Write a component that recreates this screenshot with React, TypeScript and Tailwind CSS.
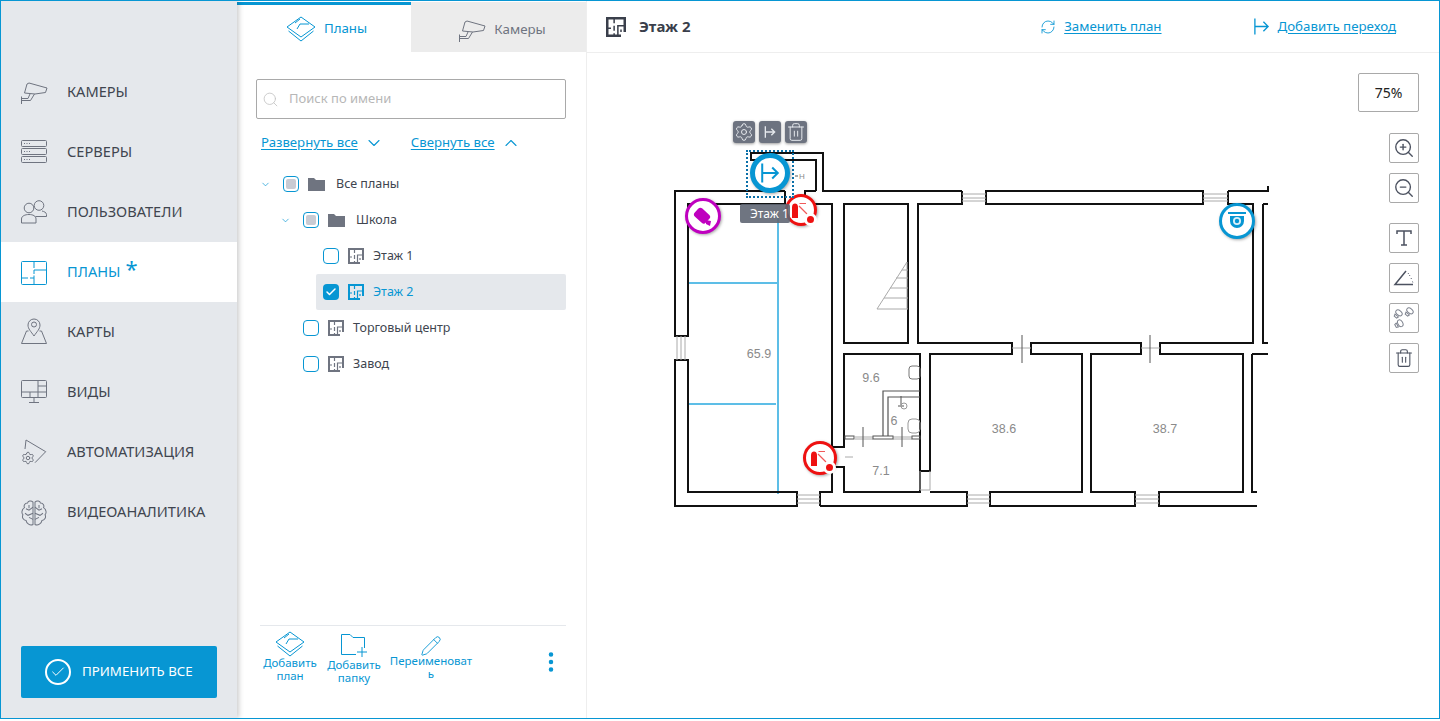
import React from 'react';
import { Check, ChevronDown, ChevronUp, Search, RefreshCw, ZoomIn, ZoomOut, Trash2, Pencil, MoreVertical, Settings } from 'lucide-react';

const FONT = "font-['Noto_Sans','Open_Sans',sans-serif]";

const Svg: React.FC<{ size?: number; vb?: string; className?: string; children: React.ReactNode }> = ({ size = 28, vb = '0 0 28 28', className = '', children }) => (
  <svg width={size} height={size} viewBox={vb} fill="none" stroke="currentColor" strokeWidth={1} className={className}>
    {children}
  </svg>
);

const CameraIcon = () => (
  <Svg>
    <path d="M7 6 L9 5 L27 10 L25.5 14.5 L15 16 L4.5 15 Z M10 16 L8 20.5 H1.5 M1.5 18.5 V26 M14.5 16 L10.5 22.5 H1.5" />
  </Svg>
);
const ServersIcon = () => (
  <Svg>
    <rect x="1.5" y="2.5" width="25" height="6" rx="1" />
    <rect x="1.5" y="10.5" width="25" height="6" rx="1" />
    <rect x="1.5" y="18.5" width="25" height="6" rx="1" />
    <path d="M4 5.5h1M6.5 5.5h1M9 5.5h1M4 13.5h1M6.5 13.5h1M9 13.5h1M4 21.5h1M6.5 21.5h1M9 21.5h1" />
  </Svg>
);
const UsersIcon = () => (
  <Svg>
    <circle cx="19" cy="7.5" r="4.8" />
    <circle cx="9" cy="10" r="4.8" />
    <path d="M1.5 25 V21 C1.5 18 5 16.5 9 16.5 C13 16.5 16 18 16 21 V25 Z M15.5 18.5 H26.5 V16.5 C26.5 14.5 24 13.5 22 13" />
  </Svg>
);
const PlanIcon = () => (
  <Svg>
    <rect x="1.5" y="3.5" width="25" height="23" rx="1" />
    <path d="M14 3.5 V10 M14 12 H26.5 M14 12 V16 M1.5 20 H8 M10 20 H14 V26.5 M14 17.5 V20" />
  </Svg>
);
const FloorIcon: React.FC<{ size?: number; className?: string }> = ({ size = 16, className = '' }) => (
  <svg width={size} height={size} viewBox="0 0 16 16" fill="none" stroke="currentColor" className={className}>
    <path d="M12 15 H1 V1 H15 V12" strokeWidth="2" />
    <path d="M6.5 1 V5 M6.5 7 V11 M1 9 H4 M6.5 13 V15 M9.5 15 V7 H15 M12 10 V12" strokeWidth="1.2" />
  </svg>
);
const MapIcon = () => (
  <Svg>
    <circle cx="14" cy="6.5" r="2.5" />
    <path d="M14 18 C11 13.5 8 11 8 7 A6 6 0 0 1 20 7 C20 11 17 13.5 14 18 Z M8.5 13 H6.5 L1.5 25.5 H26.5 L21.5 13 H19.5" />
  </Svg>
);
const ViewsIcon = () => (
  <Svg>
    <rect x="1.5" y="2.5" width="25" height="17" rx="1" />
    <path d="M1.5 14 H26.5 M18 2.5 V19.5 M18 8 H26.5 M10 14 V19.5 M14 19.5 V24.5 M9 24.5 H19" />
  </Svg>
);
const AutoIcon = () => (
  <Svg>
    <path d="M5 11 L6 2 L25.7 13.7 L15 24.7" />
    <Settings x={1} y={13} width={14} height={14} strokeWidth={1.7} />
  </Svg>
);
const BrainIcon = () => (
  <Svg>
    <g transform="translate(0 1) scale(1 1.02)">
      <path d="M13 3 C11 1 8 2 7.5 4 C4.5 4 3.5 7 4.5 8.5 C2 10 1 13.5 3 15.5 C1.5 18 3.5 21 6 21 C6.5 24 10 26.5 13 25 Z M15 3 C17 1 20 2 20.5 4 C23.5 4 24.5 7 23.5 8.5 C26 10 27 13.5 25 15.5 C26.5 18 24.5 21 22 21 C21.5 24 18 26.5 15 25 Z" />
      <path d="M13 8 L9 11 L6 9.5 M13 14 L8 16 L5 14 M13 20 L9 18 M9 6 V9 M15 8 L19 11 L22 9.5 M15 14 L20 16 L23 14 M15 20 L19 18 M19 6 V9" />
    </g>
  </Svg>
);
const LayersIcon = () => (
  <svg width="30" height="26" viewBox="0 0 30 26" fill="none" stroke="currentColor" strokeWidth="1">
    <path d="M15 1 L29 11 L15 21 L1 11 Z M9 7 L14 3 M14 8 H23 M14 8 L11 13" />
    <path d="M2.5 15 L15 25 L27.5 15" />
  </svg>
);
const ExitGlyph: React.FC<{ size?: number; className?: string; strokeWidth?: number }> = ({ size = 18, className = '', strokeWidth = 1.5 }) => (
  <svg width={size} height={size} viewBox="0 0 18 18" fill="none" stroke="currentColor" strokeWidth={strokeWidth} className={className}>
    <path d="M2 .5 V17.5 M2 9 H16 M11 4 L16 9 L11 14" />
  </svg>
);

const navItems = [
  { label: 'КАМЕРЫ', icon: <CameraIcon /> },
  { label: 'СЕРВЕРЫ', icon: <ServersIcon /> },
  { label: 'ПОЛЬЗОВАТЕЛИ', icon: <UsersIcon /> },
  { label: 'ПЛАНЫ', icon: <PlanIcon />, active: true },
  { label: 'КАРТЫ', icon: <MapIcon /> },
  { label: 'ВИДЫ', icon: <ViewsIcon /> },
  { label: 'АВТОМАТИЗАЦИЯ', icon: <AutoIcon /> },
  { label: 'ВИДЕОАНАЛИТИКА', icon: <BrainIcon /> },
];

const Sidebar = () => (
  <aside className="w-[236px] shrink-0 bg-[#e5e8ec] flex flex-col pt-[61px] shadow-[2px_0_5px_rgba(0,0,0,0.2)] z-10">
    {navItems.map((item) => (
      <div key={item.label} className={`h-[60px] flex items-center pl-[19px] gap-[19px] text-[14.6px] ${item.active ? 'bg-white text-[#0796d3]' : 'text-[#40454f]'}`}>
        <span className={item.active ? 'text-[#0796d3]' : 'text-[#6f7480]'}>{item.icon}</span>
        <span>{item.label}</span>
        {item.active && <span className="text-[22px] leading-none -ml-[14px] -mt-[8px]">*</span>}
      </div>
    ))}
    <div className="mt-auto mx-[20px] mb-[20px] h-[52px] bg-[#0796d3] rounded-[2px] flex items-center pl-[24px] pb-[1px] gap-[11px] text-white text-[13.3px]">
      <span className="w-[26px] h-[26px] mt-[1px] rounded-full border-2 border-white flex items-center justify-center">
        <Check size={16} strokeWidth={1.5} />
      </span>
      ПРИМЕНИТЬ ВСЕ
    </div>
  </aside>
);

type TreeRow = { label: string; pad: string; kind: 'folder' | 'plan'; state: 'some' | 'none' | 'checked'; arrow?: boolean; selected?: boolean };

const treeRows: TreeRow[] = [
  { label: 'Все планы', pad: 'ml-[5px]', kind: 'folder', state: 'some', arrow: true },
  { label: 'Школа', pad: 'ml-[25px]', kind: 'folder', state: 'some', arrow: true },
  { label: 'Этаж 1', pad: 'ml-[60px]', kind: 'plan', state: 'none' },
  { label: 'Этаж 2', pad: 'ml-[60px]', kind: 'plan', state: 'checked', selected: true },
  { label: 'Торговый центр', pad: 'ml-[40px]', kind: 'plan', state: 'none' },
  { label: 'Завод', pad: 'ml-[40px]', kind: 'plan', state: 'none' },
];

const Box: React.FC<{ state: TreeRow['state'] }> = ({ state }) => {
  if (state === 'checked')
    return (
      <span className="w-4 h-4 rounded-[4px] bg-[#0796d3] flex items-center justify-center text-white">
        <Check size={12} strokeWidth={3} />
      </span>
    );
  return (
    <span className="w-4 h-4 rounded-[4px] border border-[#0796d3] flex items-center justify-center bg-white">
      {state === 'some' && <span className="w-[10px] h-[10px] rounded-[2px] bg-[#c9cbd3]" />}
    </span>
  );
};

const Folder = () => (
  <svg width="17" height="13" viewBox="0 0 17 13" className="text-[#6f7480]">
    <path d="M0 0 H6 L8 2 H17 V13 H0 Z" fill="currentColor" />
  </svg>
);

const Tree = () => (
  <div className="mt-[13px]">
    {treeRows.map((r) => (
      <div key={r.label} className={`h-[36px] flex items-center text-[12.5px] ${r.pad} ${r.selected ? 'bg-[#e5e8ec] rounded-[2px] text-[#0796d3]' : 'text-[#40454f]'}`}>
        {r.arrow && <ChevronDown size={11} className="text-[#0796d3] -ml-[1px] mr-[12px]" strokeWidth={1.5} />}
        <span className={r.selected || r.state !== 'some' ? 'ml-[7px]' : ''}><Box state={r.state} /></span>
        <span className="ml-[9px]">
          {r.kind === 'folder' ? <Folder /> : <FloorIcon className={r.selected ? 'text-[#0796d3]' : 'text-[#6f7480]'} />}
        </span>
        <span className={r.kind === 'folder' ? 'ml-[11px]' : 'ml-[9px]'}>{r.label}</span>
      </div>
    ))}
  </div>
);

const FootButton: React.FC<{ icon: React.ReactNode; lines: string[]; w: string; textClass?: string }> = ({ icon, lines, w, textClass = '' }) => (
  <div className={`flex flex-col items-center ${w}`}>
    <span className="h-[25px] flex items-end">{icon}</span>
    <span className={`flex flex-col items-center ${textClass}`}>
      {lines.map((l) => (
        <span key={l} className="text-[11.5px] leading-[12.5px]">{l}</span>
      ))}
    </span>
  </div>
);

const PlansPanel = () => (
  <section className="w-[350px] shrink-0 flex flex-col border-r border-[#eeeeee] pt-[1px]">
    <div className="flex h-[50px]">
      <div className="w-[174px] border-t-[3px] border-[#0796d3] flex items-center justify-center gap-[8px] text-[#0796d3] text-[13.3px] pl-[5px] pt-[1px]">
        <LayersIcon /> Планы
      </div>
      <div className="flex-1 bg-[#ececec] flex items-center justify-center gap-[8px] text-[#6f7480] text-[13.3px] pt-[5px] pl-[7px]">
        <CameraIcon /> Камеры
      </div>
    </div>
    <div className="pl-[19px] pr-[20px] flex-1 flex flex-col">
      <div className="mt-[27px] h-[40px] border border-[#a9a9a9] rounded-[2px] flex items-center pl-[5px] gap-[10px] text-[#b7b7b7] text-[13px]">
        <Search size={17} strokeWidth={1.2} className="text-[#c4c4c4]" />
        Поиск по имени
      </div>
      <div className="mt-[14px] h-[20px] flex items-center pl-[5px] text-[#0796d3] text-[13.2px]">
        <span className="underline underline-offset-2">Развернуть все</span>
        <ChevronDown size={20} strokeWidth={1.3} className="ml-[6px]" />
        <span className="underline underline-offset-2 ml-[27px]">Свернуть все</span>
        <ChevronUp size={20} strokeWidth={1.3} className="ml-[6px]" />
      </div>
      <Tree />
      <div className="mt-auto ml-[4px] h-[93px] border-t border-[#e5e8ec] flex items-start pt-[6px] text-[#0796d3] relative">
        <FootButton icon={<LayersIcon />} lines={['Добавить', 'план']} w="w-[60px]" />
        <FootButton icon={
          <svg width="26" height="23" viewBox="0 0 26 23" fill="none" stroke="currentColor">
            <path d="M15 20.5 H.5 V.5 H9 L12 3.5 H23.5 V14 M21 13 V23 M16 18 H26" />
          </svg>
        } lines={['Добавить', 'папку']} w="w-[68px]" textClass="mt-[2px]" />
        <FootButton icon={<Pencil size={22} strokeWidth={1} />} lines={['Переименоват', 'ь']} w="w-[86px]" textClass="-mt-[2px]" />
        <MoreVertical size={26} strokeWidth={2.2} className="absolute right-[2px] top-[23px]" />
      </div>
    </div>
  </section>
);

const wallPath = [
  // наружный контур слева и снизу
  'M962 191 H823 V153 H751 V160 H816 V191',
  'M785 191 H675 V336 H688 V204 H785 V191',
  'M675 360 H688 V492 H797 V506 H675 Z',
  'M820 506 V492 H832 V467 H844 V492 H920 V471 H930 V354 H1012 V343 H918 V204 H962 V191',
  'M816 191 H805 V204 H832 V447 H844 V354 H920 V471',
  'M844 204 H908 V343 H844 Z',
  // верхняя полоса
  'M986 191 H1203 V204 H986 Z',
  'M1228 191 H1268 V186 M1228 191 V204 H1253 V343 H1160 V354 H1243 V492 H1159 V506 H1257',
  'M1263 204 H1268 M1263 204 V343 H1268',
  'M1031 343 H1141 V354 H1091 V492 H1135 V506 H990 V492 H1082 V354 H1031 Z',
  'M820 506 H967 V492 H930',
  'M1252 354 H1268 M1252 354 V492 H1257',
].join(' ');

const FloorPlan = () => (
  <svg viewBox="587 53 853 668" className="absolute left-0 top-0 w-[853px] h-[668px]">
    <path d="M689 283 L777 283 M689 404 H776 M778 215 V494" stroke="#29a9e0" strokeWidth="1.5" fill="none" />
    <path d={wallPath} stroke="#111" strokeWidth="2" fill="none" />
    <g stroke="#aaa" strokeWidth="1" fill="none">
      <path d="M677 336 V360 M681 336 V360 M685 336 V360" />
      <path d="M797 495 H820 M797 499 H820 M797 503 H820" />
      <path d="M962 194 H986 M962 198 H986 M962 201 H986" />
      <path d="M1203 194 H1228 M1203 198 H1228 M1203 201 H1228" />
      <path d="M967 495 H990 M967 499 H990 M967 503 H990" />
      <path d="M1135 495 H1159 M1135 499 H1159 M1135 503 H1159" />
      <path d="M920 490 H930 M855 437 H873 M855 439 H873 M893 437 H912 M893 439 H912 M845 457 H853" />
      <path d="M920 471 V490 M930 471 V490" />
      <path d="M877 309 L907 262 M877 309 H908 M884 298 H908 M890 288 H908 M896 278 H908 M902 270 H908 M907 262 V309" />
      <path d="M1012 348 H1031 M1141 348 H1160" />
    </g>
    <g stroke="#555" strokeWidth="1" fill="none">
      <path d="M1022 335 V363 M1150 335 V363 M863 427 V447 M902 427 V447 M795 176 H798" />
      <path d="M888 436 V397 H920 M883 436 V391 H920" strokeWidth="1.2" />
      <rect x="845" y="436" width="9" height="3" />
      <rect x="873" y="436" width="20" height="3" />
      <rect x="912" y="436" width="8" height="3" />
      <rect x="909" y="366" width="11" height="13" rx="3" stroke="#777" />
      <rect x="908" y="419" width="12" height="14" rx="4" stroke="#999" />
      <path d="M901 396 V405 M898 406 H904" />
      <circle cx="904" cy="406" r="3" stroke="#999" />
    </g>
    <g fill="#8a8a8a" fontSize="12.5" fontFamily="'Liberation Sans', sans-serif" textAnchor="middle">
      <text x="759" y="358">65.9</text>
      <text x="871" y="382">9.6</text>
      <text x="894" y="425">6</text>
      <text x="881" y="475">7.1</text>
      <text x="1004" y="433">38.6</text>
      <text x="1165" y="433">38.7</text>
      <text x="802" y="179" fontSize="8">H</text>
    </g>
  </svg>
);

const Marker: React.FC<{ className: string; children: React.ReactNode }> = ({ className, children }) => (
  <div className={`absolute rounded-full bg-white flex items-center justify-center shadow-[1px_1px_3px_rgba(0,0,0,0.35)] ${className}`}>
    {children}
  </div>
);

const Extinguisher = () => (
  <svg width="20" height="20" viewBox="0 0 20 20" fill="#ee1111" className="-ml-[2px]">
    <path d="M2 7 C2 4.5 3.5 3.5 5 3.5 C6.5 3.5 8 4.5 8 7 V18 H2 Z" />
    <path d="M9 6 L17 14 M9.5 3.5 H16" stroke="#f05a5a" strokeWidth="1.2" fill="none" />
  </svg>
);

const RedDot: React.FC<{ className: string }> = ({ className }) => (
  <span className={`absolute w-[13px] h-[13px] rounded-full bg-white flex items-center justify-center ${className}`}>
    <span className="w-[7px] h-[7px] rounded-full bg-[#ee1111]" />
  </span>
);

const Markers = () => (
  <>
    {/* красный датчик под подсказкой */}
    <Marker className="left-[198px] top-[141px] w-[32px] h-[32px] border-[3px] border-[#ee1111]">
      <Extinguisher />
      <RedDot className="left-[16px] top-[16px]" />
    </Marker>
    <Marker className="left-[216px] top-[388px] w-[34px] h-[34px] border-[3px] border-[#ee1111]">
      <Extinguisher />
      <RedDot className="left-[17px] top-[17px]" />
    </Marker>
    <Marker className="left-[98px] top-[145px] w-[36px] h-[36px] border-[3px] border-[#bf00bf]">
      <svg width="24" height="24" viewBox="0 0 24 24" fill="#bf00bf">
        <rect x="4" y="6" width="15" height="11" rx="3" transform="rotate(42 11 11)" />
        <path d="M15 16 L20 17 L19 22 L15 20 Z" />
      </svg>
    </Marker>
    <Marker className="left-[632px] top-[150px] w-[36px] h-[36px] border-[3px] border-[#0796d3]">
      <svg width="22" height="20" viewBox="0 0 22 20">
        <path d="M2 1 H20 V3 H2 Z M4 5 H18 V10 A7 7 0 0 1 4 10 Z" fill="#0796d3" />
        <circle cx="11" cy="10" r="4" fill="#fff" opacity="0.85" />
        <circle cx="11" cy="10" r="2.2" fill="#0796d3" />
      </svg>
    </Marker>
    <div className="absolute left-[159px] top-[97px] w-[48px] h-[48px] border-2 border-dotted border-[#0a6fa8]" />
    <Marker className="left-[163px] top-[100px] w-[40px] h-[40px] border-[5px] border-[#0796d3]">
      <ExitGlyph size={20} className="text-[#0796d3]" strokeWidth={1.8} />
    </Marker>
    <div className="absolute left-[146px] top-[68px] flex gap-[4px] text-[#e5e8ec]">
      <span className="w-[22px] h-[22px] rounded-[3px] bg-[#6d7380] shadow-[0_1px_3px_rgba(0,0,0,0.4)] flex items-center justify-center"><Settings size={20} strokeWidth={1.2} /></span>
      <span className="w-[22px] h-[22px] rounded-[3px] bg-[#6d7380] shadow-[0_1px_3px_rgba(0,0,0,0.4)] flex items-center justify-center"><ExitGlyph size={12} strokeWidth={2} /></span>
      <span className="w-[22px] h-[22px] rounded-[3px] bg-[#6d7380] shadow-[0_1px_3px_rgba(0,0,0,0.4)] flex items-center justify-center"><Trash2 size={20} strokeWidth={1.2} /></span>
    </div>
    <div className="absolute left-[153px] top-[151px] w-[50px] h-[19px] rounded-[2px] bg-[#5f6673]/90 text-white text-[12px] leading-[19px] pl-[10px] whitespace-nowrap">Этаж 1</div>
  </>
);

const ToolButton: React.FC<{ className?: string; children: React.ReactNode }> = ({ className = '', children }) => (
  <div className={`w-[30px] h-[30px] border border-[#a9a9a9] rounded-[2px] bg-white flex items-center justify-center text-[#4c5260] ${className}`}>
    {children}
  </div>
);

const Shoe: React.FC<{ x: number; y: number; r: number }> = ({ x, y, r }) => (
  <g transform={`translate(${x} ${y}) rotate(${r})`}>
    <ellipse cx="0" cy="-1.5" rx="3.6" ry="2.4" />
    <path d="M-2.2 2 H2.2 L1.6 4 H-1.6 Z" />
  </g>
);

const Tools = () => (
  <div className="absolute right-[20px] top-[20px] flex flex-col items-end">
    <div className="w-[61px] h-[39px] border border-[#a9a9a9] rounded-[2px] bg-white flex items-center justify-center text-[14px] text-[#222]">75%</div>
    <ToolButton className="mt-[21px]"><ZoomIn size={22} strokeWidth={1.5} /></ToolButton>
    <ToolButton className="mt-[10px]"><ZoomOut size={22} strokeWidth={1.5} /></ToolButton>
    <ToolButton className="mt-[20px]">
      <svg width="20" height="18" viewBox="0 0 20 18" fill="none" stroke="currentColor" strokeWidth="1.5">
        <path d="M3 5 V2 H17 V5 M10 2 V16 M7 16 H13" />
      </svg>
    </ToolButton>
    <ToolButton className="mt-[10px]">
      <svg width="22" height="18" viewBox="0 0 22 18" fill="none" stroke="currentColor" strokeWidth="1.5">
        <path d="M20 15.5 H2 L13 2" />
        <path d="M15 4 L17 7 M18 9 L19 11 M19.5 12.5 L20 14" strokeDasharray="1 1.5" strokeWidth="1" />
      </svg>
    </ToolButton>
    <ToolButton className="mt-[10px]">
      <svg width="26" height="26" viewBox="0 0 26 26" fill="none" stroke="#7d828e" strokeWidth="1">
        <Shoe x={7} y={9} r={40} />
        <Shoe x={18} y={7} r={40} />
        <Shoe x={8} y={19} r={60} />
      </svg>
    </ToolButton>
    <ToolButton className="mt-[10px]"><Trash2 size={20} strokeWidth={1.3} /></ToolButton>
  </div>
);

const MainArea = () => (
  <main className="flex-1 min-w-0 flex flex-col pt-[1px]">
    <header className="h-[51px] border-b border-[#eeeeee] flex items-center pl-[19px] pr-[43px] pb-[1px] shrink-0">
      <span className="text-[#3a3f4b] mr-[13px]"><FloorIcon size={20} /></span>
      <b className="text-[15px] text-[#3a3f4b] font-bold">Этаж 2</b>
      <span className="ml-auto text-[#0796d3] flex items-center text-[13.3px]">
        <RefreshCw size={16} strokeWidth={1.3} className="mr-[8px]" />
        <span className="underline underline-offset-2">Заменить план</span>
      </span>
      <span className="ml-[91px] text-[#0796d3] flex items-center text-[13.3px]">
        <ExitGlyph size={17} className="mr-[8px]" strokeWidth={1.4} />
        <span className="underline underline-offset-2">Добавить переход</span>
      </span>
    </header>
    <div className="relative flex-1">
      <FloorPlan />
      <Markers />
      <Tools />
    </div>
  </main>
);

export default function App() {
  return (
    <div className={`h-[721px] w-[1440px] pb-[2px] overflow-hidden bg-white ${FONT}`}>
      <div className="h-full flex border border-[#0796d3] bg-white overflow-hidden">
        <Sidebar />
        <PlansPanel />
        <MainArea />
      </div>
    </div>
  );
}
